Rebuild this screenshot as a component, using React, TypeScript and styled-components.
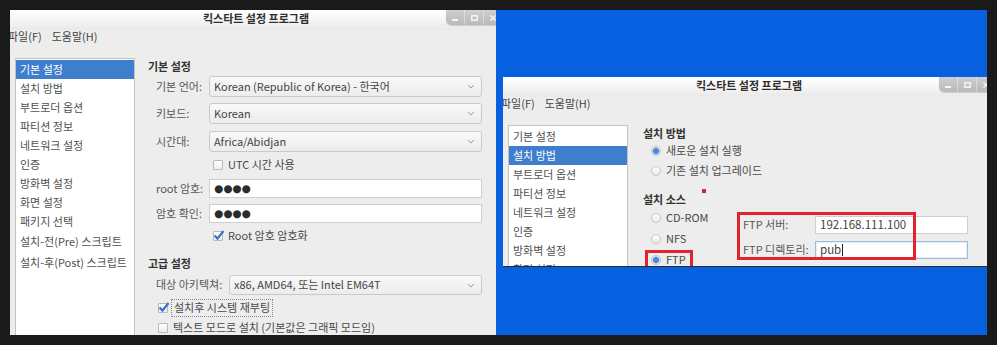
import React from "react";
import styled, { createGlobalStyle, css } from "styled-components";

const GlobalStyle = createGlobalStyle`
  html, body {
    margin: 0;
    padding: 0;
    background: #1a1a1a;
  }
  body {
    font-family: "Noto Sans CJK KR", "DejaVu Sans", sans-serif;
    font-size: 11px;
    line-height: 1.2;
    color: #4a4a4a;
  }
`;

const Frame = styled.div`
  width: 997px;
  height: 345px;
  box-sizing: border-box;
  padding: 10px;
  background: #1a1a1a;
  display: flex;
  overflow: hidden;
`;

const LeftShot = styled.div`
  width: 486px;
  height: 100%;
  overflow: hidden;
  flex: none;
`;

const Desktop = styled.div`
  flex: 1;
  height: 100%;
  background: #0760e0;
  overflow: hidden;
  padding: 67px 0 0 7px;
  box-sizing: border-box;
`;

const Window = styled.div<{ $height: number }>`
  width: 492px;
  height: ${(p) => p.$height}px;
  background: #ededed;
  overflow: hidden;
  display: flex;
  flex-direction: column;
  box-sizing: border-box;
  border-bottom: ${(p) => (p.$height < 300 ? "1px solid #2a2a2a" : "none")};
`;

const TitleBar = styled.div`
  height: 20px;
  flex: none;
  display: grid;
  grid-template-columns: 1fr auto 1fr;
  align-items: start;
  background: linear-gradient(#ffffff, #f4f4f4 55%, #e9e9e9);
`;

const Title = styled.div`
  grid-column: 2;
  font-weight: bold;
  font-size: 11px;
  line-height: 15px;
  padding-top: 1px;
  color: #2e2e2e;
`;

const Controls = styled.div`
  grid-column: 3;
  justify-self: end;
  display: flex;
  height: 15px;
  border-bottom-left-radius: 5px;
  overflow: hidden;
  background: linear-gradient(#cfcfcf, #b9b9b9);
  box-shadow: 0 1px 1px rgba(0, 0, 0, 0.15);
`;

const CtrlButton = styled.div`
  width: 18px;
  height: 15px;
  display: flex;
  align-items: center;
  justify-content: center;
  border-left: 1px solid rgba(255, 255, 255, 0.35);
  &:first-child {
    border-left: none;
  }
`;

const MenuBar = styled.div`
  height: 13px;
  flex: none;
  display: flex;
  gap: 10px;
  margin-left: -2px;
  font-size: 11px;
  line-height: 12px;
  color: #444;
`;

const Body = styled.div<{ $gap: number }>`
  flex: 1;
  display: flex;
  gap: ${(p) => p.$gap}px;
  padding: 15px 0 0 5px;
  min-height: 0;
`;

const Sidebar = styled.div`
  width: 120px;
  flex: none;
  background: #fff;
  border: 1px solid #c3c3c3;
  border-bottom: none;
  box-sizing: border-box;
  padding-top: 1px;
`;

const NavItem = styled.div<{ $active?: boolean; $tall?: boolean }>`
  height: ${(p) => (p.$tall ? 21 : 19)}px;
  line-height: ${(p) => (p.$tall ? 21 : 19)}px;
  padding-left: 4px;
  white-space: nowrap;
  color: #505050;
  ${(p) =>
    p.$active &&
    css`
      background: #3f7ecd;
      color: #fff;
    `}
`;

const Main = styled.div`
  flex: 1;
  display: flex;
  flex-direction: column;
  padding-right: 20px;
  min-width: 0;
`;

const Heading = styled.div<{ $top?: number }>`
  position: relative;
  height: 16px;
  line-height: 16px;
  font-weight: bold;
  color: #333;
  margin-top: ${(p) => p.$top ?? 0}px;
`;

const FieldRow = styled.div<{ $top: number; $labelWidth: number }>`
  display: grid;
  grid-template-columns: ${(p) => p.$labelWidth}px 1fr;
  align-items: center;
  margin-top: ${(p) => p.$top}px;
  padding-left: 8px;
`;

const Label = styled.div`
  color: #585858;
  white-space: nowrap;
`;

const Combo = styled.div<{ $h?: number }>`
  height: ${(p) => p.$h ?? 21}px;
  box-sizing: border-box;
  border: 1px solid #c9c9c9;
  border-radius: 3px;
  background: linear-gradient(#f9f9f9, #ececec);
  display: flex;
  align-items: center;
  justify-content: space-between;
  padding: 0 6px 0 4px;
  color: #444;
  white-space: nowrap;
`;

const Entry = styled.div<{ $focus?: boolean }>`
  height: 19px;
  box-sizing: border-box;
  border: 1px solid ${(p) => (p.$focus ? "#9dbbe0" : "#cfcfcf")};
  background: #fff;
  display: flex;
  align-items: center;
  padding: 0 4px;
  color: #444;
  white-space: nowrap;
  ${(p) =>
    p.$focus &&
    css`
      box-shadow: inset 0 0 0 1px #e3edf9;
    `}
`;

const Dots = styled.span`
  font-family: "DejaVu Sans", sans-serif;
  font-size: 10.5px;
  color: #2b2b2b;
`;

const Caret = styled.span`
  display: inline-block;
  width: 1px;
  height: 12px;
  background: #222;
  margin-left: 1px;
`;

const CheckRow = styled.div<{ $top: number; $indent: number }>`
  height: 20px;
  display: flex;
  align-items: center;
  gap: 5px;
  margin-top: ${(p) => p.$top}px;
  padding-left: ${(p) => p.$indent}px;
  color: #4a4a4a;
  white-space: nowrap;
`;

const Box = styled.span`
  position: relative;
  width: 8px;
  height: 8px;
  flex: none;
  border: 1px solid #b9b9b9;
  background: linear-gradient(#fff, #eee);
  border-radius: 1px;
`;

const Tick = styled.svg`
  position: absolute;
  left: -1px;
  top: -3px;
`;

const FocusLabel = styled.span`
  outline: 1px dotted #888;
  outline-offset: 1px;
  padding: 0 1px;
`;

const RadioList = styled.div`
  display: flex;
  flex-direction: column;
  padding-left: 8px;
`;

const RadioRow = styled.div<{ $h: number }>`
  position: relative;
  height: ${(p) => p.$h}px;
  display: flex;
  align-items: center;
  gap: 5px;
  color: #4a4a4a;
  white-space: nowrap;
`;

const Radio = styled.span<{ $on?: boolean }>`
  width: 10px;
  height: 10px;
  flex: none;
  box-sizing: border-box;
  border-radius: 50%;
  border: 1px solid #c2c2c2;
  background: ${(p) =>
    p.$on
      ? "radial-gradient(circle, #4d8ad6 0 2.6px, #9ec0ea 3.2px, #f4f7fb 4px)"
      : "linear-gradient(#fff, #e9e9e9)"};
`;

const SourceArea = styled.div`
  display: flex;
`;

const SourceRadios = styled.div`
  width: 94px;
  flex: none;
`;

const FtpPanel = styled.div`
  position: relative;
  flex: 1;
  padding: 9px 0 0 6px;
  display: grid;
  grid-template-columns: 72px 153px;
  grid-auto-rows: 18px;
  row-gap: 7px;
  align-items: center;
`;

const Highlight = styled.div<{ $l: number; $t: number; $w: number; $h: number }>`
  position: absolute;
  left: ${(p) => p.$l}px;
  top: ${(p) => p.$t}px;
  width: ${(p) => p.$w}px;
  height: ${(p) => p.$h}px;
  box-sizing: border-box;
  border: 3px solid #e2222d;
  pointer-events: none;
`;

const Marker = styled.div`
  position: absolute;
  left: 59px;
  top: -2px;
  width: 4px;
  height: 4px;
  background: #e0202a;
`;

const SmallEntry = styled(Entry)`
  height: 18px;
  font-size: 11.5px;
`;

const Chevron = () => (
  <svg width="8" height="5" viewBox="0 0 8 5">
    <polyline points="1,1 4,4 7,1" fill="none" stroke="#9a9a9a" strokeWidth="1" />
  </svg>
);

const Check = ({ on }: { on?: boolean }) => (
  <Box>
    {on && (
      <Tick width="12" height="12" viewBox="0 0 12 12">
        <path d="M1.5 6.5 L4.5 9.5 L10.5 2" fill="none" stroke="#3a74c6" strokeWidth="2.2" />
      </Tick>
    )}
  </Box>
);

const WindowHeader = () => (
  <>
    <TitleBar>
      <Title>킥스타트 설정 프로그램</Title>
      <Controls>
        <CtrlButton>
          <svg width="6" height="6" viewBox="0 0 6 6">
            <rect x="0" y="4" width="6" height="2" fill="#f4f4f4" />
          </svg>
        </CtrlButton>
        <CtrlButton>
          <svg width="7" height="6" viewBox="0 0 7 6">
            <rect x="0.75" y="0.75" width="5.5" height="4.5" fill="none" stroke="#f4f4f4" strokeWidth="1.5" />
          </svg>
        </CtrlButton>
        <CtrlButton>
          <svg width="6" height="6" viewBox="0 0 6 6">
            <path d="M0.5 0.5 L5.5 5.5 M5.5 0.5 L0.5 5.5" stroke="#f4f4f4" strokeWidth="1.5" />
          </svg>
        </CtrlButton>
      </Controls>
    </TitleBar>
    <MenuBar>
      <span>파일(F)</span>
      <span>도움말(H)</span>
    </MenuBar>
  </>
);

const navItems = [
  "기본 설정",
  "설치 방법",
  "부트로더 옵션",
  "파티션 정보",
  "네트워크 설정",
  "인증",
  "방화벽 설정",
  "화면 설정",
  "패키지 선택",
  "설치-전(Pre) 스크립트",
  "설치-후(Post) 스크립트",
];

const Nav = ({ active }: { active: number }) => (
  <Sidebar>
    {navItems.map((label, i) => (
      <NavItem key={label} $active={i === active} $tall={i >= 9}>
        {label}
      </NavItem>
    ))}
  </Sidebar>
);

const BasicSettings = () => (
  <Window $height={340}>
    <WindowHeader />
    <Body $gap={13}>
      <Nav active={0} />
      <Main>
        <Heading>기본 설정</Heading>
        <FieldRow $top={2} $labelWidth={53}>
          <Label>기본 언어:</Label>
          <Combo>
            <span>Korean (Republic of Korea) - 한국어</span>
            <Chevron />
          </Combo>
        </FieldRow>
        <FieldRow $top={6} $labelWidth={53}>
          <Label>키보드:</Label>
          <Combo>
            <span>Korean</span>
            <Chevron />
          </Combo>
        </FieldRow>
        <FieldRow $top={7} $labelWidth={53}>
          <Label>시간대:</Label>
          <Combo>
            <span>Africa/Abidjan</span>
            <Chevron />
          </Combo>
        </FieldRow>
        <CheckRow $top={3} $indent={65}>
          <Check />
          <span>UTC 시간 사용</span>
        </CheckRow>
        <FieldRow $top={4} $labelWidth={53}>
          <Label>root 암호:</Label>
          <Entry>
            <Dots>●●●●</Dots>
          </Entry>
        </FieldRow>
        <FieldRow $top={6} $labelWidth={53}>
          <Label>암호 확인:</Label>
          <Entry>
            <Dots>●●●●</Dots>
          </Entry>
        </FieldRow>
        <CheckRow $top={3} $indent={65}>
          <Check on />
          <span>Root 암호 암호화</span>
        </CheckRow>
        <Heading $top={9}>고급 설정</Heading>
        <FieldRow $top={4} $labelWidth={73}>
          <Label>대상 아키텍쳐:</Label>
          <Combo $h={20}>
            <span>x86, AMD64, 또는 Intel EM64T</span>
            <Chevron />
          </Combo>
        </FieldRow>
        <CheckRow $top={3} $indent={10}>
          <Check on />
          <FocusLabel>설치후 시스템 재부팅</FocusLabel>
        </CheckRow>
        <CheckRow $top={0} $indent={10}>
          <Check />
          <span>텍스트 모드로 설치 (기본값은 그래픽 모드임)</span>
        </CheckRow>
      </Main>
    </Body>
  </Window>
);

const InstallMethod = () => (
  <Window $height={190}>
    <WindowHeader />
    <Body $gap={15}>
      <Nav active={1} />
      <Main>
        <Heading>설치 방법</Heading>
        <RadioList>
          <RadioRow $h={20}>
            <Radio $on />
            <span>새로운 설치 실행</span>
          </RadioRow>
          <RadioRow $h={20}>
            <Radio />
            <span>기존 설치 업그레이드</span>
          </RadioRow>
        </RadioList>
        <Heading $top={10}>
          설치 소스
          <Marker />
        </Heading>
        <SourceArea>
          <SourceRadios>
            <RadioList>
              <RadioRow $h={21}>
                <Radio />
                <span>CD-ROM</span>
              </RadioRow>
              <RadioRow $h={22}>
                <Radio />
                <span>NFS</span>
              </RadioRow>
              <RadioRow $h={20}>
                <Radio $on />
                <span>FTP</span>
                <Highlight $l={-6} $t={0} $w={48} $h={19} />
              </RadioRow>
            </RadioList>
          </SourceRadios>
          <FtpPanel>
            <Label>FTP 서버:</Label>
            <SmallEntry>192.168.111.100</SmallEntry>
            <Label>FTP 디렉토리:</Label>
            <SmallEntry $focus>
              pub
              <Caret />
            </SmallEntry>
            <Highlight $l={0} $t={5} $w={179} $h={48} />
          </FtpPanel>
        </SourceArea>
      </Main>
    </Body>
  </Window>
);

export default function App() {
  return (
    <>
      <GlobalStyle />
      <Frame>
        <LeftShot>
          <BasicSettings />
        </LeftShot>
        <Desktop>
          <InstallMethod />
        </Desktop>
      </Frame>
    </>
  );
}
